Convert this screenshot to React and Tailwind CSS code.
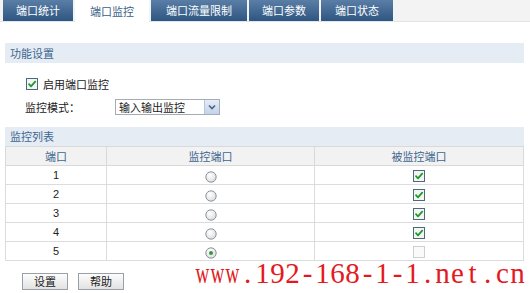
import React from "react";

const font = { fontFamily: '"Noto Sans CJK SC", "Noto Sans", sans-serif' };

function Radio({ checked }) {
  return (
    <svg width="12" height="12" viewBox="0 0 12 12">
      <defs>
        <radialGradient id={checked ? "rg1" : "rg0"} cx="40%" cy="35%" r="70%">
          <stop offset="0%" stopColor="#ffffff" />
          <stop offset="100%" stopColor="#dcdcdc" />
        </radialGradient>
      </defs>
      <circle cx="6" cy="6" r="5.2" fill={`url(#${checked ? "rg1" : "rg0"})`} stroke="#7a8a99" strokeWidth="0.9" />
      {checked && <circle cx="6" cy="6" r="2" fill="#2f9a3a" />}
    </svg>
  );
}

function Check({ checked, disabled }) {
  return (
    <svg width="12" height="12" viewBox="0 0 12 12">
      <rect x="0.5" y="0.5" width="11" height="11" fill={disabled ? "#fafafa" : "#f4f4f4"} stroke={disabled ? "#cfcfcf" : "#4a6a7a"} strokeWidth="1" />
      {checked && (
        <path d="M3 6.2 L5 8.3 L9.2 3.6" fill="none" stroke="#1e9a2a" strokeWidth="1.8" strokeLinecap="round" strokeLinejoin="round" />
      )}
    </svg>
  );
}

const tabs = [
  { label: "端口统计", w: "w-[70px]" },
  { label: "端口监控", w: "w-[74px]", active: true },
  { label: "端口流量限制", w: "w-[96px]" },
  { label: "端口参数", w: "w-[70px]" },
  { label: "端口状态", w: "w-[72px]" },
];

const rows = [
  { p: 1, r: false, c: true },
  { p: 2, r: false, c: true },
  { p: 3, r: false, c: true },
  { p: 4, r: false, c: true },
  { p: 5, r: true, c: false, d: true },
];

const mark = "www.192-168-1-1.net.cn".split("");

export default function App() {
  return (
    <div className="w-[530px] h-[293px] bg-white overflow-hidden relative text-[12px] text-[#333]" style={font}>
      {/* tab bar */}
      <div className="h-[22px] bg-[#f3f3f3] border-b border-[#e4e4e4] flex items-start pl-[3px] gap-[2px]">
        {tabs.map((t) =>
          t.active ? (
            <div key={t.label} className={`${t.w} h-[22px] bg-white flex items-center justify-center text-[#3a5f88] text-[11px] leading-none`}>
              {t.label}
            </div>
          ) : (
            <div
              key={t.label}
              className={`${t.w} h-[21px] bg-gradient-to-b from-[#5a7ea6] to-[#2e5682] flex items-center justify-center text-white text-[11px] leading-none`}
            >
              {t.label}
            </div>
          )
        )}
      </div>

      <div className="px-[5px] pt-[21px]">
        {/* section 1 */}
        <div className="w-[519px] h-[20px] bg-[#e5ecf3] flex items-center pl-[5px] text-[#3d6690] text-[11px]">功能设置</div>
        <div className="h-[64px] flex flex-col">
          <div className="flex items-center h-[22px] mt-[10px] pl-[21px] gap-[5px]">
            <Check checked />
            <span className="text-[11px] text-[#222]">启用端口监控</span>
          </div>
          <div className="flex items-center h-[20px] mt-[2px] pl-[20px]">
            <span className="w-[90px] text-[11px] text-[#222]">监控模式：</span>
            <div className="w-[105px] h-[16px] border border-[#a5acb5] bg-white flex items-center">
              <span className="flex-1 pl-[3px] text-[11px] text-[#222] leading-none">输入输出监控</span>
              <div className="w-[15px] h-[14px] bg-gradient-to-b from-[#e4ecf8] to-[#c3d3ea] border-l border-[#b8c6da] flex items-center justify-center">
                <svg width="8" height="6" viewBox="0 0 8 6">
                  <path d="M1 1.5 L4 4.5 L7 1.5" fill="none" stroke="#4d6185" strokeWidth="1.6" />
                </svg>
              </div>
            </div>
          </div>
        </div>

        {/* section 2 */}
        <div className="w-[519px] h-[19px] bg-[#e5ecf3] flex items-center pl-[5px] text-[#3d6690] text-[11px]">监控列表</div>
        <table className="w-[519px] border-collapse text-[11px]">
          <thead>
            <tr className="h-[19px] bg-[#f2f2f2] text-[#3d6690]">
              <th className="font-normal border border-[#d9d9d9] w-[101px]">端口</th>
              <th className="font-normal border border-[#d9d9d9] w-[208px]">监控端口</th>
              <th className="font-normal border border-[#d9d9d9]">被监控端口</th>
            </tr>
          </thead>
          <tbody>
            {rows.map((r) => (
              <tr key={r.p} className="h-[19px]">
                <td className="border border-[#dcdcdc] text-center text-[#222] leading-none" style={{ fontFamily: '"Liberation Sans", sans-serif' }}>{r.p}</td>
                <td className="border border-[#dcdcdc]">
                  <div className="flex justify-center pt-[3px]">
                    <Radio checked={r.r} />
                  </div>
                </td>
                <td className="border border-[#dcdcdc]">
                  <div className="flex justify-center pt-[1px]">
                    <Check checked={r.c} disabled={r.d} />
                  </div>
                </td>
              </tr>
            ))}
          </tbody>
        </table>

        {/* buttons */}
        <div className="flex gap-[10px] pl-[17px] mt-[12px]">
          <div className="w-[46px] h-[17px] border border-[#9aa0a8] bg-gradient-to-b from-[#fdfdfd] to-[#e2e2e2] flex items-center justify-center text-[11px] text-[#222]">设置</div>
          <div className="w-[46px] h-[17px] border border-[#9aa0a8] bg-gradient-to-b from-[#fdfdfd] to-[#e2e2e2] flex items-center justify-center text-[11px] text-[#222]">帮助</div>
        </div>
      </div>

      {/* watermark */}
      <div
        className="absolute left-[195px] top-[259px] flex text-[29px] leading-none text-[#e3191e] whitespace-nowrap"
        style={{ fontFamily: '"Liberation Serif", serif' }}
      >
        {mark.map((ch, i) => (
          <span key={i} className="w-[15px] flex justify-center">
            {ch === "w" ? <span className="inline-block scale-x-[0.66]">{ch}</span> : ch}
          </span>
        ))}
      </div>
    </div>
  );
}
